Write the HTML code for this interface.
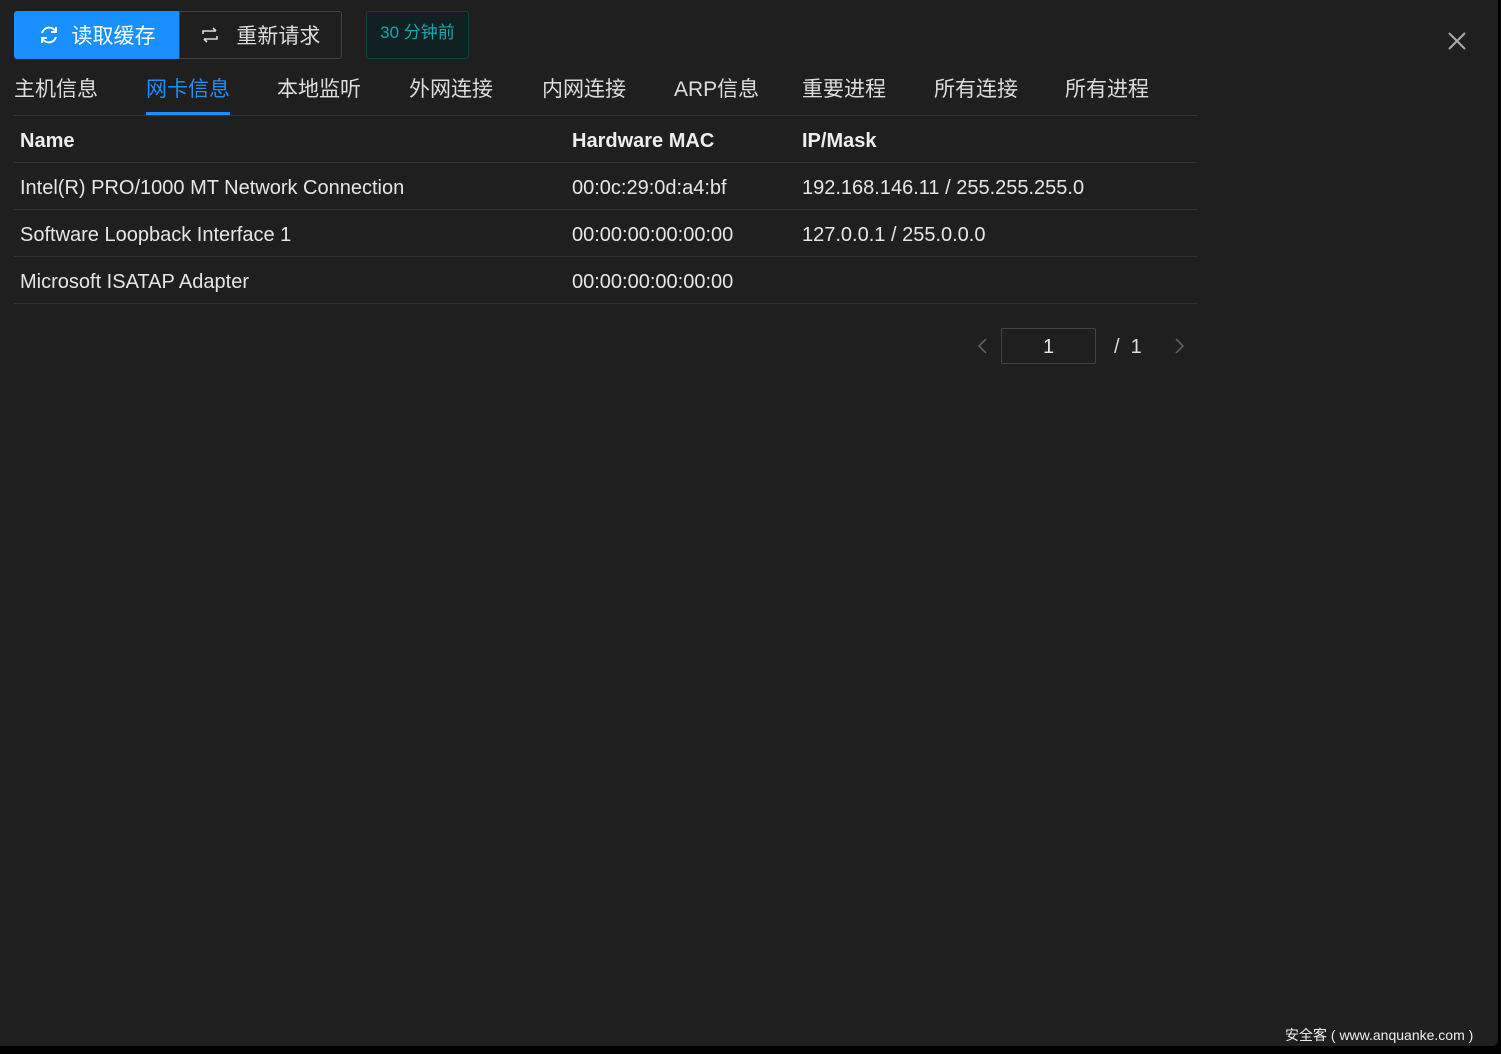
<!DOCTYPE html>
<html><head><meta charset="utf-8"><style>
*{box-sizing:border-box;margin:0;padding:0}
body{width:1501px;height:1054px;background:#000;font-family:"Liberation Sans","Noto Sans CJK SC",sans-serif;color:#e6e6e6;position:relative;overflow:hidden}
.panel{position:absolute;left:0;top:0;width:1498px;height:1046px;background:#1f1f1f;border-radius:0 0 6px 0}
.btn{position:absolute;top:11px;height:48px;font-size:21px;display:flex;align-items:center;justify-content:center;gap:12px}
.b1{left:14px;width:165px;background:#1890ff;color:#fff;border-radius:3px 0 0 3px}
.b2{left:179px;width:163px;border:1px solid #434343;color:#ddd;border-radius:0 3px 3px 0}
.tag{position:absolute;left:366px;top:11px;width:103px;height:48px;border:1px solid #13413f;background:#112123;color:#13a8a8;font-size:17px;text-align:center;padding-top:6px;border-radius:3px}
.close{position:absolute;left:1446px;top:30px;width:22px;height:22px}
.tabs{position:absolute;left:14px;top:72px;width:1183px;height:44px;border-bottom:1px solid #333}
.tab{position:absolute;top:1px;font-size:21px;color:#ddd;white-space:nowrap}
.tab.a{color:#1890ff}
.ink{position:absolute;left:132px;top:40px;width:84px;height:3px;background:#1890ff}
.row{position:absolute;left:14px;width:1183px;height:47px;border-bottom:1px solid #333;font-size:20px}
.row span{position:absolute;top:14px;white-space:nowrap}
.h{font-weight:bold;color:#eee}
.pg{position:absolute;top:328px;font-size:20px;color:#ddd}
.inp{position:absolute;left:1001px;top:328px;width:95px;height:36px;border:1px solid #434343;border-radius:2px;text-align:center;font-size:20px;padding-top:7px}
.wm{position:absolute;left:1285px;top:1025px;font-size:14px;color:#eee}
</style></head><body>
<div class="panel">
<div class="btn b1"><svg width="22" height="22" viewBox="0 0 22 22" fill="none" stroke="#fff" stroke-width="2"><path d="M4 9a7.5 7.5 0 0 1 14 -1M18 13a7.5 7.5 0 0 1 -14 1"/><path d="M18 3v5h-5M4 19v-5h5"/></svg>读取缓存</div>
<div class="btn b2"><svg width="18" height="16" viewBox="0 0 18 16" fill="none" stroke="#ddd" stroke-width="1.6"><path d="M2 7V4h13M12 1l3 3M16 9v3H3M6 15l-3-3"/></svg>&nbsp;重新请求</div>
<div class="tag">30 分钟前</div>
<svg class="close" viewBox="0 0 22 22" stroke="#aaa" stroke-width="2"><path d="M3 3L19 19M19 3L3 19"/></svg>
<div class="tabs">
<div class="tab" style="left:0">主机信息</div>
<div class="tab a" style="left:132px">网卡信息</div>
<div class="tab" style="left:263px">本地监听</div>
<div class="tab" style="left:395px">外网连接</div>
<div class="tab" style="left:528px">内网连接</div>
<div class="tab" style="left:660px">ARP信息</div>
<div class="tab" style="left:788px">重要进程</div>
<div class="tab" style="left:920px">所有连接</div>
<div class="tab" style="left:1051px">所有进程</div>
<div class="ink"></div>
</div>
<div class="row h" style="top:116px"><span style="left:6px">Name</span><span style="left:558px">Hardware MAC</span><span style="left:788px">IP/Mask</span></div>
<div class="row" style="top:163px"><span style="left:6px">Intel(R) PRO/1000 MT Network Connection</span><span style="left:558px">00:0c:29:0d:a4:bf</span><span style="left:788px">192.168.146.11 / 255.255.255.0</span></div>
<div class="row" style="top:210px"><span style="left:6px">Software Loopback Interface 1</span><span style="left:558px">00:00:00:00:00:00</span><span style="left:788px">127.0.0.1 / 255.0.0.0</span></div>
<div class="row" style="top:257px"><span style="left:6px">Microsoft ISATAP Adapter</span><span style="left:558px">00:00:00:00:00:00</span></div>
<svg style="position:absolute;left:976px;top:337px" width="12" height="18" fill="none" stroke="#666" stroke-width="1.5"><path d="M10 2L3 9l7 7"/></svg>
<div class="inp">1</div>
<div class="pg" style="left:1114px;top:336px">/&nbsp;&nbsp;1</div>
<svg style="position:absolute;left:1174px;top:337px" width="12" height="18" fill="none" stroke="#666" stroke-width="1.5"><path d="M2 2l7 7-7 7"/></svg>
<div class="wm">安全客 ( www.anquanke.com )</div>
</div>
</body></html>
